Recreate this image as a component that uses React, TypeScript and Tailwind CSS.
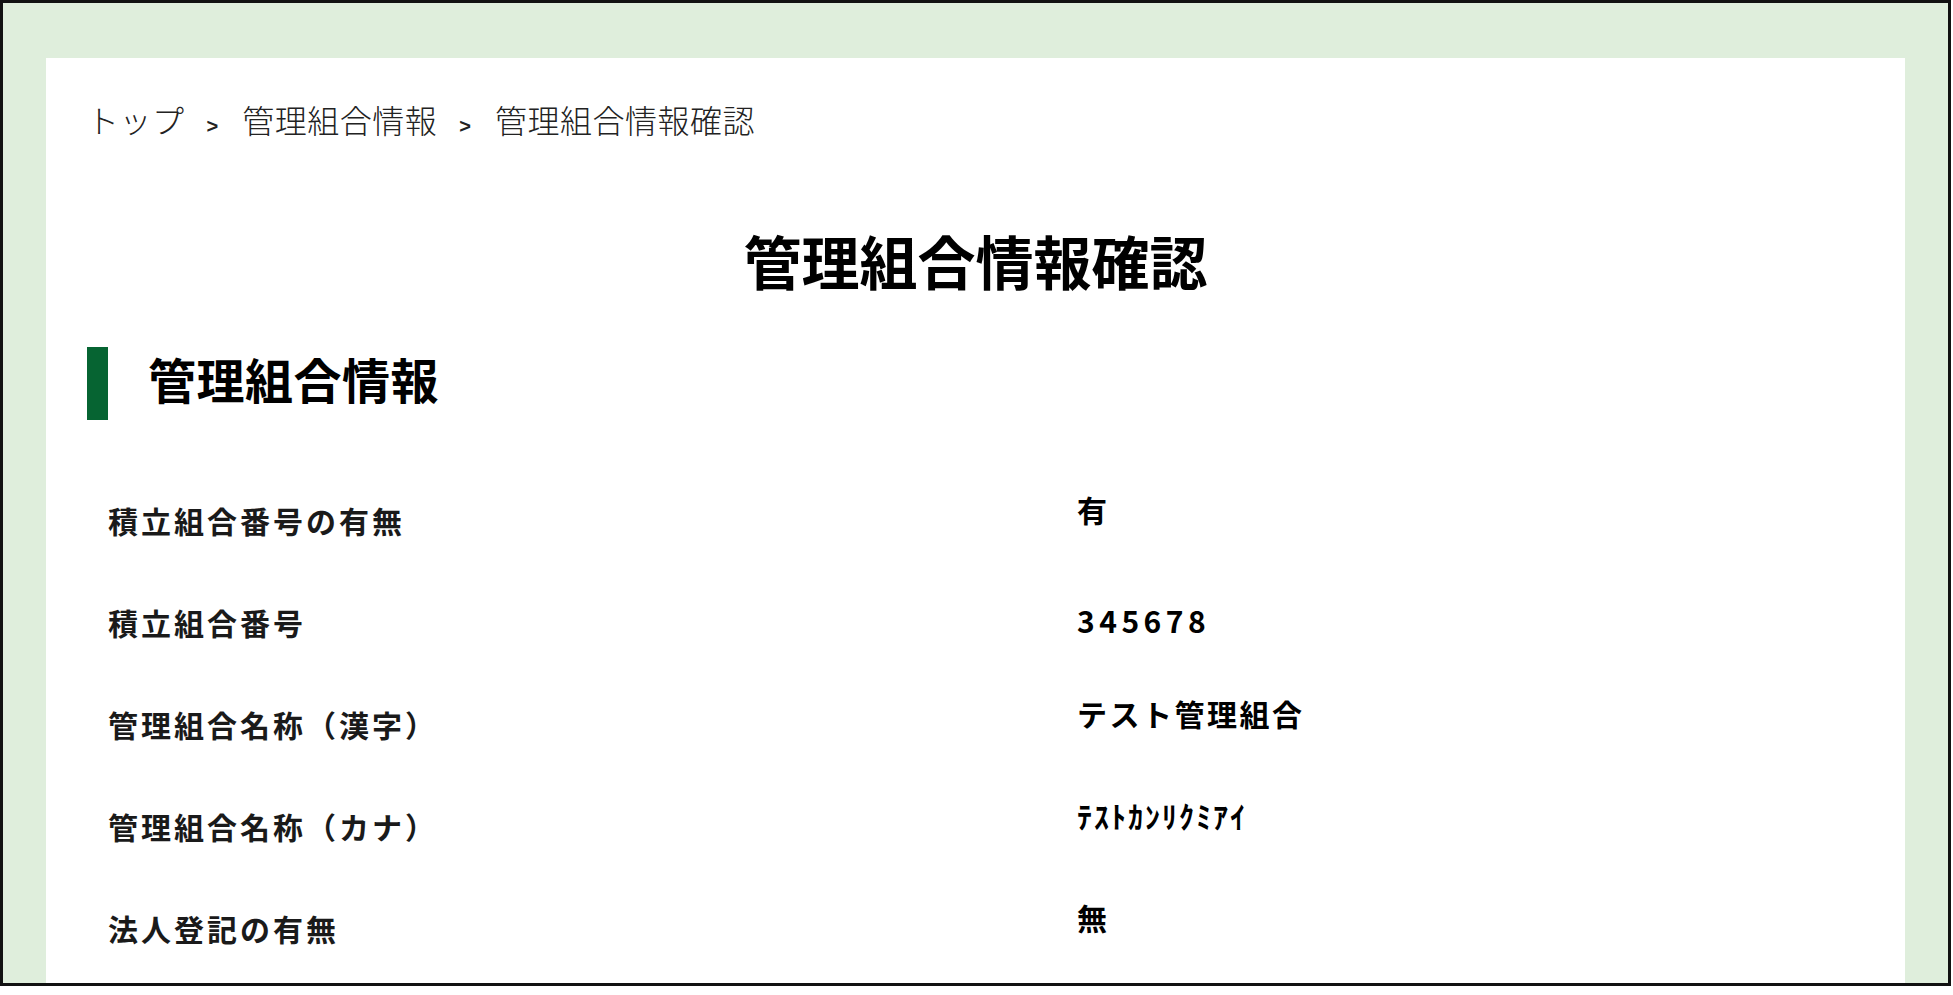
const rows: { label: string; value: string; kind?: 'num' | 'kana' }[] = [
  { label: '積立組合番号の有無', value: '有' },
  { label: '積立組合番号', value: '345678', kind: 'num' },
  { label: '管理組合名称（漢字）', value: 'テスト管理組合' },
  { label: '管理組合名称（カナ）', value: 'ﾃｽﾄｶﾝﾘｸﾐｱｲ', kind: 'kana' },
  { label: '法人登記の有無', value: '無' },
];

function Crumb({ children }: { children: React.ReactNode }) {
  return <span className="tracking-[0.5px]">{children}</span>;
}

function Sep() {
  return (
    <span className="ml-[22px] mr-[24px] font-['Liberation_Sans',sans-serif] text-[20px] font-semibold text-[#222]">
      &gt;
    </span>
  );
}

export default function App() {
  return (
    <div className="h-[995px] w-full overflow-hidden bg-white font-['Noto_Sans_CJK_JP',sans-serif]">
      <div className="flex h-[986px] w-[1951px] flex-col border-[3px] border-[#111] bg-[#dfeedc] px-[43px] pt-[55px]">
        <main className="min-h-0 flex-1 overflow-hidden bg-white px-[41px] pt-[37px] text-black">
          <nav className="whitespace-nowrap text-[32px] font-light leading-[48px] text-[#222]">
            <Crumb>トップ</Crumb>
            <Sep />
            <Crumb>管理組合情報</Crumb>
            <Sep />
            <Crumb>管理組合情報確認</Crumb>
          </nav>

          <h1 className="mt-[81px] text-center text-[58px] font-bold leading-[58px]">
            管理組合情報確認
          </h1>

          <div className="mt-[58px] flex items-start gap-[40px]">
            <div className="h-[73px] w-[21px] bg-[#066432]" />
            <h2 className="text-[48px] font-bold leading-[63px] tracking-[0.5px]">管理組合情報</h2>
          </div>

          <dl className="mt-[65px] pl-[21px]">
            {rows.map((r) => (
              <div key={r.label} className="flex h-[102px] items-start">
                <dt className="w-[969px] pt-[11px] text-[30px] font-semibold leading-[48px] tracking-[3px] text-[#1a1a1a]">
                  {r.label}
                </dt>
                <dd
                  className={
                    r.kind === 'num'
                      ? 'mt-[9px] text-[30px] font-bold leading-[48px] tracking-[4.5px]'
                      : r.kind === 'kana'
                        ? 'text-[30px] font-bold leading-[48px] tracking-[2px]'
                        : 'text-[30px] font-bold leading-[48px] tracking-[2.5px]'
                  }
                >
                  {r.value}
                </dd>
              </div>
            ))}
          </dl>
        </main>
      </div>
    </div>
  );
}
